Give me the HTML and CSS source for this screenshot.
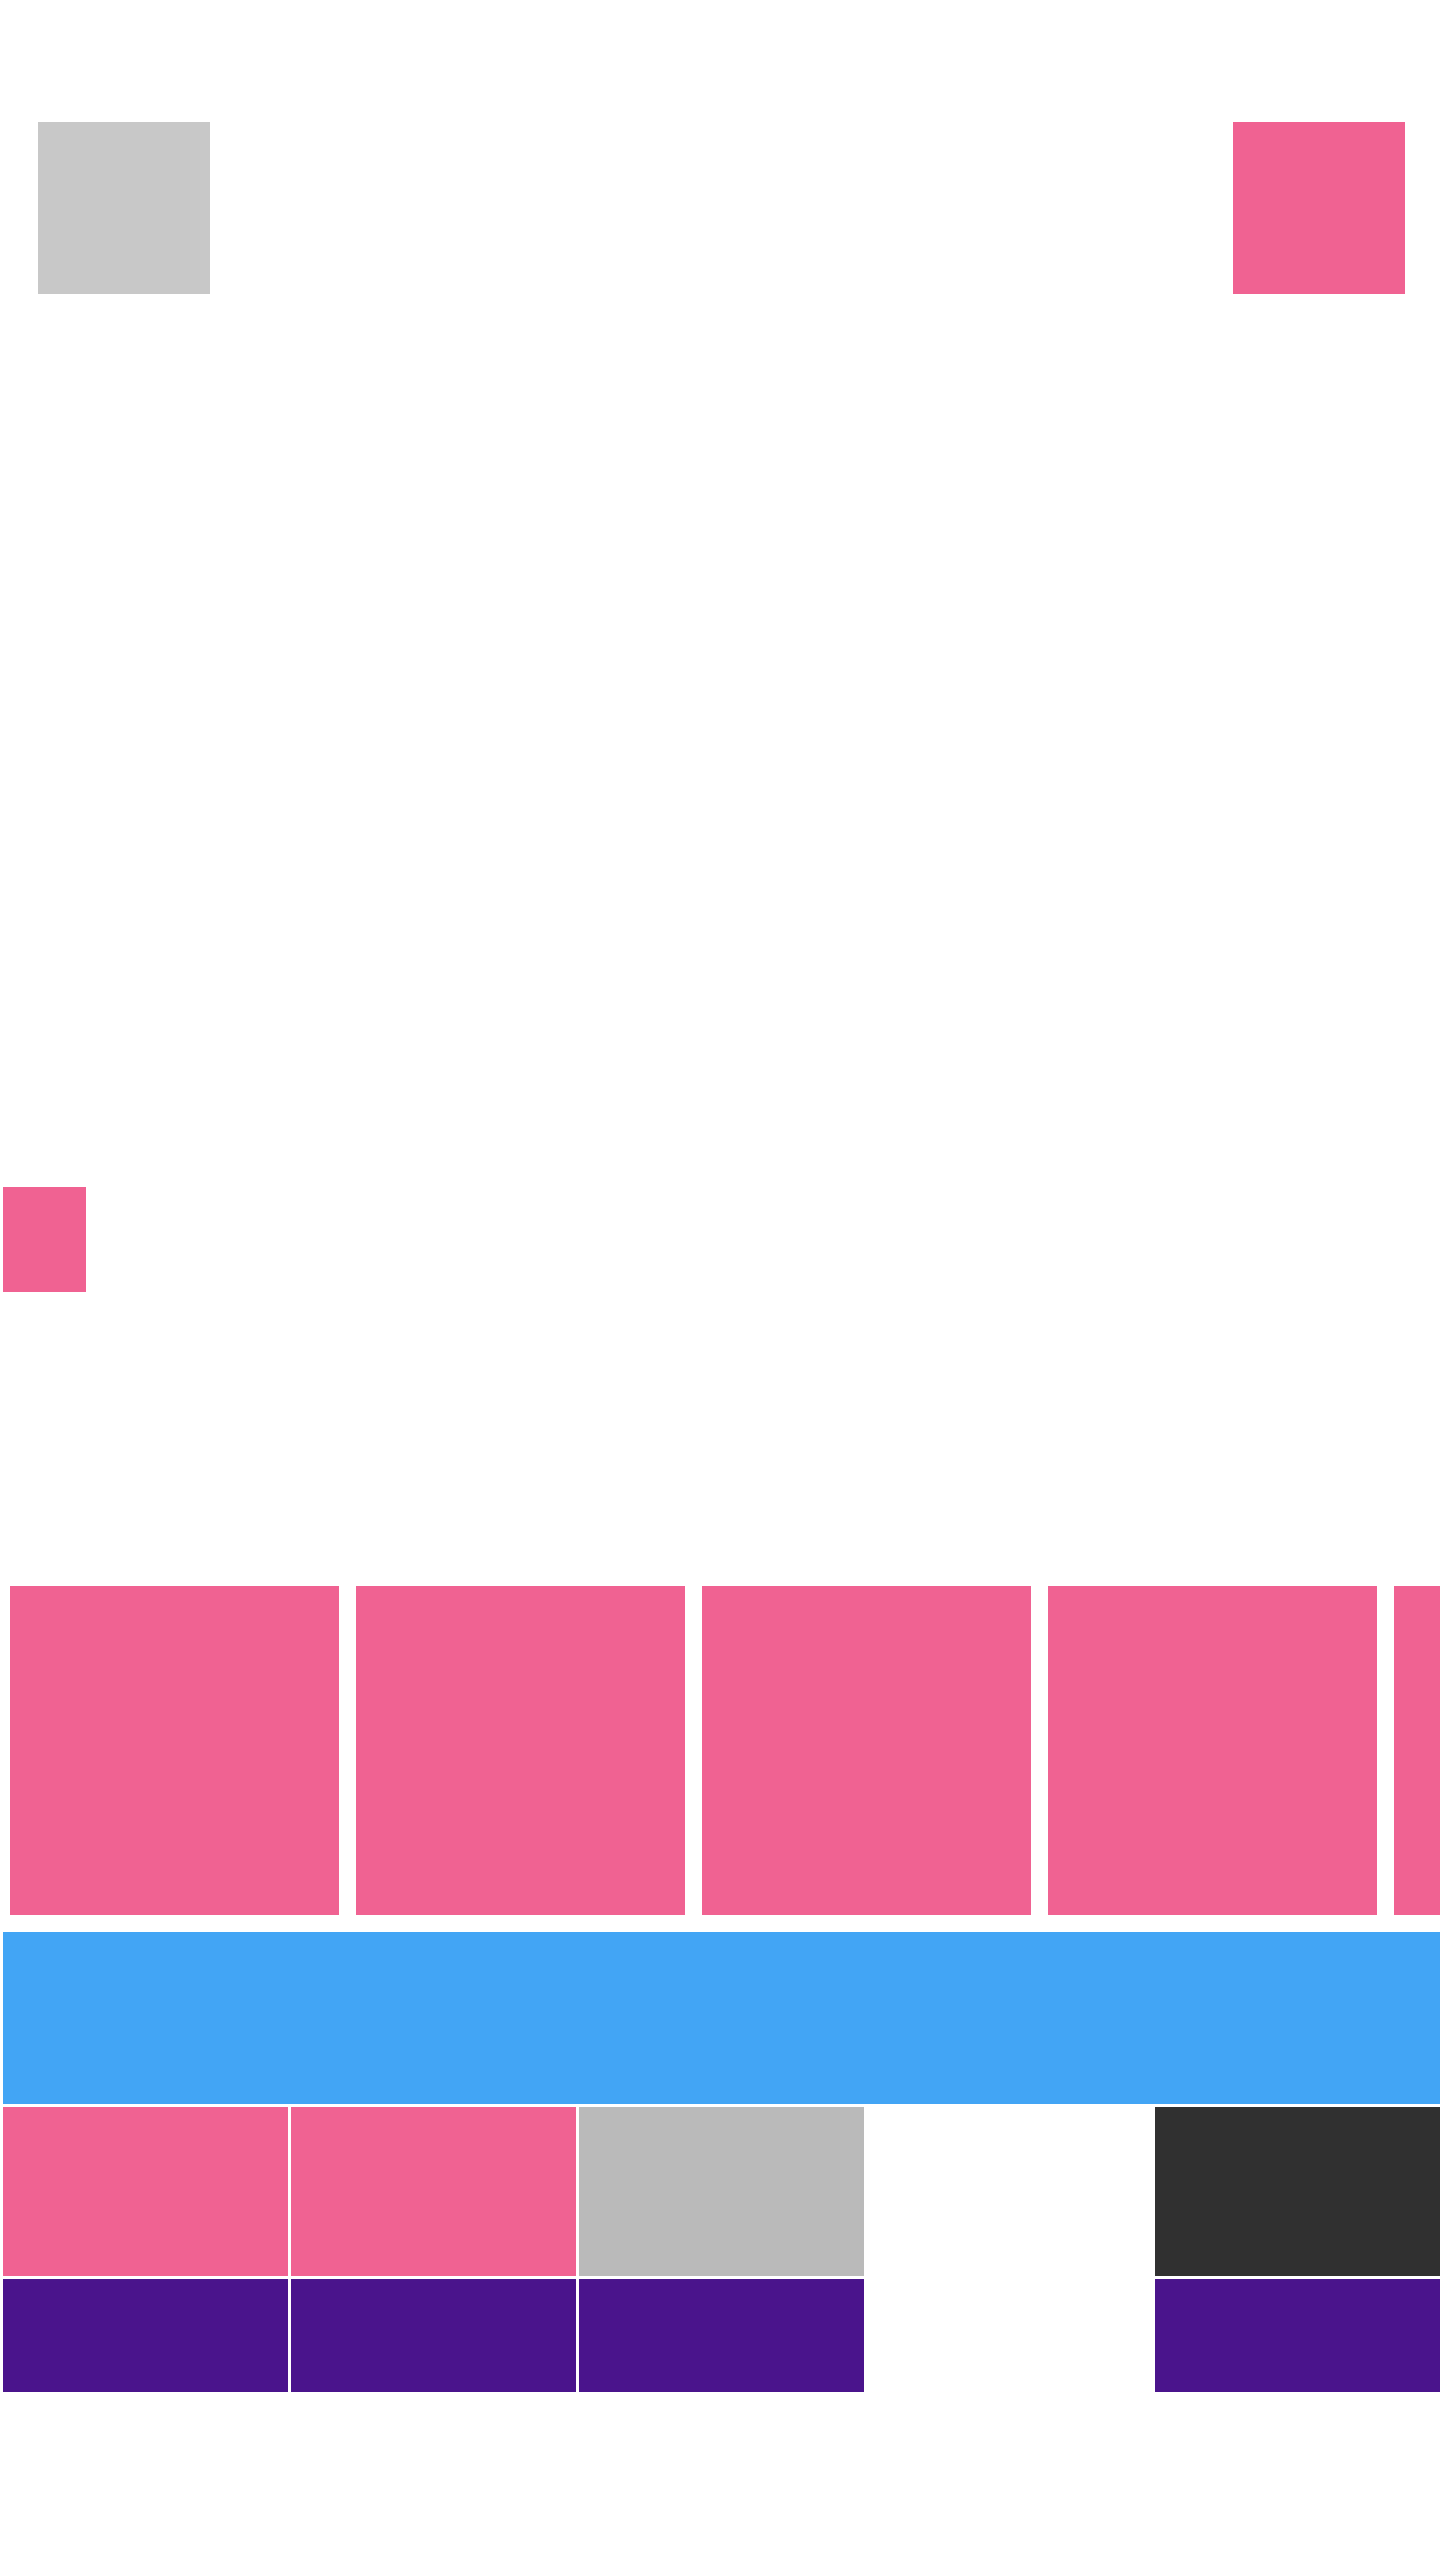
FILE: index.html
```html
<!DOCTYPE html>
<html lang="en">
<head>
<meta charset="utf-8">
<title>Blocks</title>
<link rel="stylesheet" href="styles.css">
</head>
<body>
<div class="page">
  <header class="top">
    <div class="sq sq-gray"></div>
    <div class="sq sq-pink"></div>
  </header>
  <main class="content">
    <div class="chip"></div>
    <div class="cards">
      <div class="card"></div>
      <div class="card"></div>
      <div class="card"></div>
      <div class="card"></div>
      <div class="card"></div>
    </div>
    <div class="banner"></div>
    <div class="grid">
      <div class="cell pink"></div>
      <div class="cell pink"></div>
      <div class="cell gray"></div>
      <div class="cell empty"></div>
      <div class="cell dark"></div>
      <div class="cell purple"></div>
      <div class="cell purple"></div>
      <div class="cell purple"></div>
      <div class="cell empty"></div>
      <div class="cell purple"></div>
    </div>
  </main>
</div>
</body>
</html>
```
FILE: styles.css
```css
html, body {
  margin: 0;
  padding: 0;
  background: #ffffff;
  font-family: "Liberation Sans", Arial, sans-serif;
}
.page {
  width: 1440px;
  overflow: hidden;
}
.top {
  display: flex;
  justify-content: space-between;
  padding: 122px 35px 0 38px;
}
.sq {
  width: 172px;
  height: 172px;
}
.sq-gray { background: #c8c8c8; }
.sq-pink { background: #f06292; }

.content {
  padding-left: 3px;
  display: flex;
  flex-direction: column;
}
.chip {
  width: 83px;
  height: 105px;
  margin-top: 893px;
  background: #f06292;
}
.cards {
  display: flex;
  gap: 17px;
  margin-top: 294px;
  padding-left: 7px;
  overflow: hidden;
}
.card {
  flex: 0 0 329px;
  height: 329px;
  background: #f06292;
}
.banner {
  margin-top: 17px;
  height: 172px;
  background: #42a5f5;
}
.grid {
  margin-top: 3px;
  display: grid;
  grid-template-columns: repeat(5, 285px);
  grid-template-rows: 169px 113px;
  gap: 3px;
}
.cell.pink { background: #f06292; }
.cell.gray { background: #bababa; }
.cell.dark { background: #303030; }
.cell.purple { background: #4a148c; }
.cell.empty { background: transparent; }
```
